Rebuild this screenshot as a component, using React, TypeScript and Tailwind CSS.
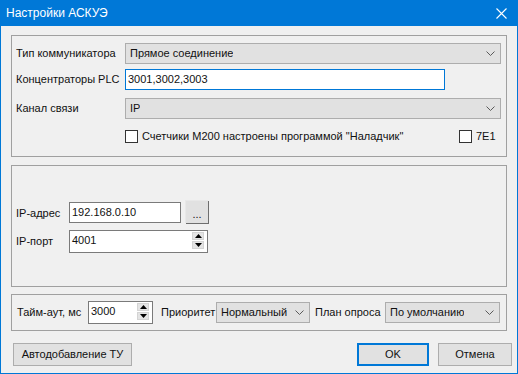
import type { ReactNode } from "react";

function Chevron() {
  return (
    <svg width="9" height="5" viewBox="0 0 9 5" className="shrink-0">
      <path d="M0.5 0.5 L4.5 4.5 L8.5 0.5" stroke="#5a5a5a" strokeWidth="1" fill="none" />
    </svg>
  );
}

function Combo({ value, className = "" }: { value: string; className?: string }) {
  return (
    <div
      className={`h-[21px] flex items-center justify-between border border-[#adadad] bg-[#e1e1e1] pl-[4px] pr-[5px] ${className}`}
    >
      <span className="truncate">{value}</span>
      <Chevron />
    </div>
  );
}

function Checkbox({ label }: { label: string }) {
  return (
    <label className="flex items-center gap-[4px]">
      <span className="w-[13px] h-[13px] border border-[#333] bg-white shrink-0" />
      <span>{label}</span>
    </label>
  );
}

function Arrow({ up }: { up?: boolean }) {
  return (
    <div className="w-[12px] h-[8px] bg-[#e4e4e4] border border-[#d4d4d4] flex items-center justify-center">
      <svg width="7" height="4" viewBox="0 0 7 4">
        <path d={up ? "M3.5 0 L7 4 L0 4 Z" : "M0 0 L7 0 L3.5 4 Z"} fill="#000" />
      </svg>
    </div>
  );
}

function SpinInput({ value, className = "" }: { value: string; className?: string }) {
  return (
    <div
      className={`h-[23px] flex items-start justify-between border border-[#7a7a7a] bg-white pl-[2px] pr-[3px] ${className}`}
    >
      <span className="leading-[16px] mt-[1px]">{value}</span>
      <div className="flex flex-col gap-[1px] mt-[1px]">
        <Arrow up />
        <Arrow />
      </div>
    </div>
  );
}

function Group({ className = "", children }: { className?: string; children: ReactNode }) {
  return <div className={`border border-[#a0a0a0] ${className}`}>{children}</div>;
}

function Button({ children, className = "" }: { children: ReactNode; className?: string }) {
  return (
    <button
      type="button"
      className={`h-[23px] flex items-center justify-center bg-[#e1e1e1] ${className}`}
    >
      {children}
    </button>
  );
}

export default function App() {
  return (
    <div className="w-[518px] h-[374px] bg-[#0078d7] flex flex-col px-px pb-px font-['Liberation_Sans',Arial,sans-serif] text-[11px] text-[#111]">
      <div className="h-[26px] flex items-center justify-between pl-[5px] pr-[10px] text-white text-[12px]">
        <span>Настройки АСКУЭ</span>
        <svg width="11" height="11" viewBox="0 0 11 11">
          <path d="M0.5 0.5 L10.5 10.5 M10.5 0.5 L0.5 10.5" stroke="#fff" strokeWidth="1.1" />
        </svg>
      </div>

      <div className="flex-1 bg-[#f0f0f0] px-[10px] pt-[9px] flex flex-col">
        <Group className="h-[122px] pl-[4px] pt-[7px]">
          <div className="flex items-center h-[21px]">
            <span className="w-[109px]">Тип коммуникатора</span>
            <Combo value="Прямое соединение" className="w-[376px]" />
          </div>
          <div className="flex items-center h-[21px] mt-[5px]">
            <span className="w-[109px]">Концентраторы PLC</span>
            <div className="w-[320px] h-[21px] border border-[#0078d7] bg-white pl-[2px] flex items-center">
              3001,3002,3003
            </div>
          </div>
          <div className="flex items-center h-[21px] mt-[8px]">
            <span className="w-[109px]">Канал связи</span>
            <Combo value="IP" className="w-[376px]" />
          </div>
          <div className="flex items-center h-[13px] mt-[11px] pl-[109px]">
            <div className="w-[334px]">
              <Checkbox label={'Счетчики М200 настроены программой "Наладчик"'} />
            </div>
            <Checkbox label="7E1" />
          </div>
        </Group>

        <Group className="h-[122px] mt-[8px] pl-[4px] pt-[34px]">
          <div className="flex items-start h-[23px]">
            <span className="w-[53px] mt-[5px]">IP-адрес</span>
            <div className="w-[112px] h-[21px] mt-[2px] border border-[#7a7a7a] bg-white pl-[2px] flex items-center">
              192.168.0.10
            </div>
            <button
              type="button"
              className="ml-[4px] w-[23px] h-[23px] bg-[#e1e1e1] border-t border-l border-[#e8e8e8] shadow-[1px_1px_0_#6e6e6e] flex items-center justify-center pt-[4px]"
            >
              ...
            </button>
          </div>
          <div className="flex items-center h-[23px] mt-[7px]">
            <span className="w-[53px]">IP-порт</span>
            <SpinInput value="4001" className="w-[139px]" />
          </div>
        </Group>

        <Group className="h-[37px] mt-[7px] pl-[5px] flex items-center">
          <span className="w-[71px]">Тайм-аут, мс</span>
          <SpinInput value="3000" className="w-[65px]" />
          <span className="ml-[8px] w-[55px]">Приоритет</span>
          <Combo value="Нормальный" className="w-[94px]" />
          <span className="ml-[5px] w-[70px]">План опроса</span>
          <Combo value="По умолчанию" className="w-[115px]" />
        </Group>

        <div className="flex items-center mt-[12px] -mr-[5px]">
          <Button className="ml-[2px] w-[119px] border border-[#adadad]">Автодобавление ТУ</Button>
          <Button className="ml-auto w-[72px] border-2 border-[#0078d7]">OK</Button>
          <Button className="ml-[9px] w-[74px] border border-[#adadad]">Отмена</Button>
        </div>
      </div>
    </div>
  );
}
